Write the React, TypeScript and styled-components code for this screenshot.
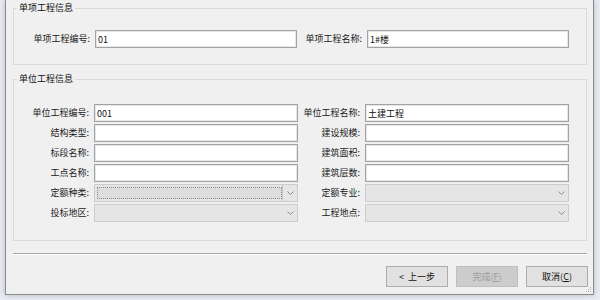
import styled, { createGlobalStyle } from 'styled-components';

const GlobalStyle = createGlobalStyle`
  html, body { margin: 0; padding: 0; }
  body {
    width: 600px;
    height: 300px;
    overflow: hidden;
    background: #e8ebf2;
    font-family: "Noto Sans CJK SC", "Noto Sans", sans-serif;
    font-size: 9px;
    color: #1a1a1a;
  }
`;

const Window = styled.div`
  position: relative;
  box-sizing: border-box;
  margin-left: 5px;
  width: 589px;
  height: 295px;
  padding: 2px 6px 0 7px;
  background: #f0f0f0;
  border: 1px solid #8c8c8c;
  border-top: none;
  box-shadow: 0 0 5px rgba(60, 70, 90, 0.3);
`;

const Group = styled.fieldset<{ $top?: number; $pt: number; $pb: number }>`
  margin: ${(p) => p.$top ?? 0}px 0 0 0;
  padding: ${(p) => p.$pt}px 0 ${(p) => p.$pb}px 0;
  min-width: 0;
  border: 1px solid #dadada;
`;

const Legend = styled.legend`
  margin-left: 3px;
  padding: 0 2px;
  line-height: 12px;
  color: #111;
`;

const Grid = styled.div<{ $label: number; $input: number; $label2: number }>`
  display: grid;
  grid-template-columns: ${(p) => p.$label}px ${(p) => p.$input}px ${(p) => p.$label2}px ${(p) => p.$input}px;
  column-gap: 4px;
  row-gap: 2px;
`;

const Label = styled.div`
  line-height: 18px;
  text-align: right;
  white-space: nowrap;
  padding-right: 1px;
`;

const TextBox = styled.input`
  box-sizing: border-box;
  height: 18px;
  width: 100%;
  margin: 0;
  padding: 0 2px;
  border: 1px solid #a3a3a3;
  box-shadow: inset 0 0 0 1px #e6e6e6;
  background: #fff;
  font-family: inherit;
  font-size: 9px;
  color: #111;
  outline: none;
`;

const Combo = styled.div`
  box-sizing: border-box;
  display: flex;
  align-items: stretch;
  height: 18px;
  border: 1px solid #cccccc;
  background: #e5e5e5;
`;

const ComboField = styled.div<{ $focused?: boolean }>`
  flex: 1;
  margin: 2px 0 2px 2px;
  border: 1px ${(p) => (p.$focused ? 'dotted #8a8a8a' : 'solid transparent')};
  background: ${(p) => (p.$focused ? '#dedede' : 'transparent')};
`;

const ChevronArea = styled.div<{ $focused?: boolean }>`
  width: 14px;
  display: flex;
  align-items: center;
  justify-content: center;
  border-left: 1px solid ${(p) => (p.$focused ? '#c8c8c8' : 'transparent')};
`;

const Separator = styled.div`
  margin-top: 12px;
  height: 1px;
  background: #a8a8a8;
  border-bottom: 1px solid #ffffff;
`;

const ButtonRow = styled.div`
  display: flex;
  justify-content: flex-end;
  gap: 8px;
  margin: 11px -1px 0 0;
`;

const Button = styled.button<{ $disabled?: boolean }>`
  box-sizing: border-box;
  width: 62px;
  height: 21px;
  margin: 0;
  padding: 0;
  border: 1px solid ${(p) => (p.$disabled ? '#bfbfbf' : '#adadad')};
  background: ${(p) => (p.$disabled ? '#cccccc' : '#e1e1e1')};
  color: ${(p) => (p.$disabled ? '#9c9c9c' : '#111')};
  font-family: inherit;
  font-size: 9px;
`;

const Arrow = styled.span`
  margin-right: 4px;
`;

const Grip = styled.svg`
  position: absolute;
  right: 1px;
  bottom: 1px;
`;

const Chevron = () => (
  <svg width="7" height="4" viewBox="0 0 7 4">
    <path d="M0.5 0.5 L3.5 3.5 L6.5 0.5" fill="none" stroke="#8a8a8a" strokeWidth="1" />
  </svg>
);

const Select = ({ focused }: { focused?: boolean }) => (
  <Combo>
    <ComboField $focused={focused} />
    <ChevronArea $focused={focused}>
      <Chevron />
    </ChevronArea>
  </Combo>
);

export default function App() {
  return (
    <>
      <GlobalStyle />
      <Window>
        <Group $pt={16} $pb={16}>
          <Legend>单项工程信息</Legend>
          <Grid $label={77} $input={202} $label2={62}>
            <Label>单项工程编号:</Label>
            <TextBox defaultValue="01" />
            <Label>单项工程名称:</Label>
            <TextBox defaultValue="1#楼" />
          </Grid>
        </Group>

        <Group $top={8} $pt={19} $pb={18}>
          <Legend>单位工程信息</Legend>
          <Grid $label={76} $input={204} $label2={59}>
            <Label>单位工程编号:</Label>
            <TextBox defaultValue="001" />
            <Label>单位工程名称:</Label>
            <TextBox defaultValue="土建工程" />

            <Label>结构类型:</Label>
            <TextBox />
            <Label>建设规模:</Label>
            <TextBox />

            <Label>标段名称:</Label>
            <TextBox />
            <Label>建筑面积:</Label>
            <TextBox />

            <Label>工点名称:</Label>
            <TextBox />
            <Label>建筑层数:</Label>
            <TextBox />

            <Label>定额种类:</Label>
            <Select focused />
            <Label>定额专业:</Label>
            <Select />

            <Label>投标地区:</Label>
            <Select />
            <Label>工程地点:</Label>
            <Select />
          </Grid>
        </Group>

        <Separator />

        <ButtonRow>
          <Button>
            <Arrow>&lt;</Arrow>上一步
          </Button>
          <Button $disabled>
            完成(<u>F</u>)
          </Button>
          <Button>
            取消(<u>C</u>)
          </Button>
        </ButtonRow>

        <Grip width="7" height="7" viewBox="0 0 7 7">
          <rect x="5" y="1" width="1" height="1" fill="#b0b0b0" />
          <rect x="3" y="3" width="1" height="1" fill="#b0b0b0" />
          <rect x="5" y="3" width="1" height="1" fill="#b0b0b0" />
          <rect x="1" y="5" width="1" height="1" fill="#b0b0b0" />
          <rect x="3" y="5" width="1" height="1" fill="#b0b0b0" />
          <rect x="5" y="5" width="1" height="1" fill="#b0b0b0" />
        </Grip>
      </Window>
    </>
  );
}
